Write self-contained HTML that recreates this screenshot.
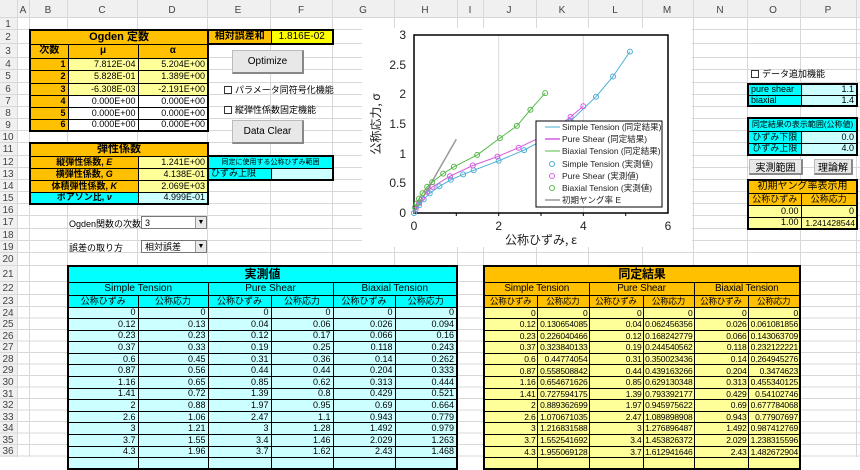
<!DOCTYPE html>
<html><head><meta charset="utf-8"><style>
*{margin:0;padding:0;box-sizing:border-box}
body{width:860px;height:457px;overflow:hidden;background:#fff;position:relative;font-family:"Liberation Sans","Noto Sans CJK JP",sans-serif;color:#000}
.a{position:absolute}
table{border-collapse:collapse;table-layout:fixed;position:absolute}
td{border:1px solid #000;font-size:9px;padding:0 2px;white-space:nowrap;overflow:hidden;line-height:1}
.o{background:#ffc000}.y{background:#ffff99}.Y{background:#ffff00}.c{background:#00ffff}.lc{background:#ccffff}.w{background:#fff}
.r{text-align:right}.m{text-align:center}.b{font-weight:bold}
.thick{border:2px solid #000}
.id td{padding:0 1px;font-size:8.5px;letter-spacing:-0.2px}
.btn{position:absolute;background:#e8e8e8;border:1px solid #bbb;border-right:2px solid #888;border-bottom:2px solid #888;font-size:10px;text-align:center;display:flex;align-items:center;justify-content:center}
.cb{position:absolute;font-size:9px;display:flex;align-items:center;gap:3px}
.cb i{display:inline-block;width:8px;height:8px;border:1px solid #333;background:#fff}
.dd{position:absolute;border:1px solid #777;background:#fff;font-size:9px;padding-left:3px;line-height:12px}
.dd b{position:absolute;right:0;top:0;width:11px;height:11px;background:#e8e8e8;border-left:1px solid #999;font-size:7px;text-align:center;line-height:11px}
</style></head><body>
<svg class="a" style="left:0;top:0" width="860" height="457">
<rect x="0" y="0" width="860" height="17" fill="#f0f0f0"/>
<rect x="0" y="0" width="17" height="457" fill="#f0f0f0"/>
<g stroke="#d8d8d8" stroke-width="1">
<line x1="17.5" y1="0" x2="17.5" y2="457"/><line x1="29.5" y1="0" x2="29.5" y2="457"/><line x1="67.5" y1="0" x2="67.5" y2="457"/><line x1="137.5" y1="0" x2="137.5" y2="457"/><line x1="207.5" y1="0" x2="207.5" y2="457"/><line x1="270.5" y1="0" x2="270.5" y2="457"/><line x1="332.5" y1="0" x2="332.5" y2="457"/><line x1="394.5" y1="0" x2="394.5" y2="457"/><line x1="457.5" y1="0" x2="457.5" y2="457"/><line x1="483.5" y1="0" x2="483.5" y2="457"/><line x1="536.5" y1="0" x2="536.5" y2="457"/><line x1="588.5" y1="0" x2="588.5" y2="457"/><line x1="642.5" y1="0" x2="642.5" y2="457"/><line x1="693.5" y1="0" x2="693.5" y2="457"/><line x1="747.5" y1="0" x2="747.5" y2="457"/><line x1="800.5" y1="0" x2="800.5" y2="457"/><line x1="856.5" y1="0" x2="856.5" y2="457"/>
<line x1="0" y1="17.5" x2="860" y2="17.5"/><line x1="0" y1="29.5" x2="860" y2="29.5"/><line x1="0" y1="43.5" x2="860" y2="43.5"/><line x1="0" y1="57.5" x2="860" y2="57.5"/><line x1="0" y1="69.5" x2="860" y2="69.5"/><line x1="0" y1="82.5" x2="860" y2="82.5"/><line x1="0" y1="94.5" x2="860" y2="94.5"/><line x1="0" y1="106.5" x2="860" y2="106.5"/><line x1="0" y1="118.5" x2="860" y2="118.5"/><line x1="0" y1="130.5" x2="860" y2="130.5"/><line x1="0" y1="142.5" x2="860" y2="142.5"/><line x1="0" y1="155.5" x2="860" y2="155.5"/><line x1="0" y1="167.5" x2="860" y2="167.5"/><line x1="0" y1="179.5" x2="860" y2="179.5"/><line x1="0" y1="191.5" x2="860" y2="191.5"/><line x1="0" y1="203.5" x2="860" y2="203.5"/><line x1="0" y1="215.5" x2="860" y2="215.5"/><line x1="0" y1="228.5" x2="860" y2="228.5"/><line x1="0" y1="240.5" x2="860" y2="240.5"/><line x1="0" y1="252.5" x2="860" y2="252.5"/><line x1="0" y1="265.5" x2="860" y2="265.5"/><line x1="0" y1="281.5" x2="860" y2="281.5"/><line x1="0" y1="294.5" x2="860" y2="294.5"/><line x1="0" y1="306.5" x2="860" y2="306.5"/><line x1="0" y1="318" x2="860" y2="318"/><line x1="0" y1="329.5" x2="860" y2="329.5"/><line x1="0" y1="341" x2="860" y2="341"/><line x1="0" y1="352.5" x2="860" y2="352.5"/><line x1="0" y1="364" x2="860" y2="364"/><line x1="0" y1="375.5" x2="860" y2="375.5"/><line x1="0" y1="387" x2="860" y2="387"/><line x1="0" y1="398.5" x2="860" y2="398.5"/><line x1="0" y1="410" x2="860" y2="410"/><line x1="0" y1="421.5" x2="860" y2="421.5"/><line x1="0" y1="433" x2="860" y2="433"/><line x1="0" y1="444.5" x2="860" y2="444.5"/><line x1="0" y1="456" x2="860" y2="456"/>
</g>
<g font-size="10" fill="#444" text-anchor="middle" font-family="Liberation Sans,sans-serif">
<text x="23" y="13">A</text><text x="48" y="13">B</text><text x="102" y="13">C</text><text x="172" y="13">D</text><text x="238" y="13">E</text><text x="301" y="13">F</text><text x="363" y="13">G</text><text x="425" y="13">H</text><text x="470" y="13">I</text><text x="509" y="13">J</text><text x="562" y="13">K</text><text x="615" y="13">L</text><text x="667" y="13">M</text><text x="720" y="13">N</text><text x="773" y="13">O</text><text x="828" y="13">P</text>
<text x="8" y="27">1</text><text x="8" y="40">2</text><text x="8" y="54">3</text><text x="8" y="67">4</text><text x="8" y="79">5</text><text x="8" y="92">6</text><text x="8" y="104">7</text><text x="8" y="116">8</text><text x="8" y="128">9</text><text x="8" y="140">10</text><text x="8" y="152">11</text><text x="8" y="165">12</text><text x="8" y="177">13</text><text x="8" y="189">14</text><text x="8" y="201">15</text><text x="8" y="213">16</text><text x="8" y="225">17</text><text x="8" y="238">18</text><text x="8" y="250">19</text><text x="8" y="262">20</text><text x="8" y="277">21</text><text x="8" y="291">22</text><text x="8" y="304">23</text><text x="8" y="316">24</text><text x="8" y="327">25</text><text x="8" y="339">26</text><text x="8" y="350">27</text><text x="8" y="362">28</text><text x="8" y="373">29</text><text x="8" y="385">30</text><text x="8" y="397">31</text><text x="8" y="408">32</text><text x="8" y="420">33</text><text x="8" y="431">34</text><text x="8" y="443">35</text><text x="8" y="454">36</text>
</g>
<rect x="362" y="28" width="330" height="219" fill="#fff"/>
<g stroke="#d9d9d9"><line x1="498.7" y1="35" x2="498.7" y2="213"/><line x1="583.3" y1="35" x2="583.3" y2="213"/></g>
<rect x="414" y="35" width="254" height="178" fill="none" stroke="#000" stroke-width="1.5"/>
<g stroke="#000"><line x1="456.3" y1="213" x2="456.3" y2="216"/><line x1="498.7" y1="213" x2="498.7" y2="216"/><line x1="541" y1="213" x2="541" y2="216"/><line x1="583.3" y1="213" x2="583.3" y2="216"/><line x1="625.7" y1="213" x2="625.7" y2="216"/></g>
<g font-size="12" fill="#222" font-family="Liberation Sans,sans-serif" text-anchor="end">
<text x="406" y="217">0</text><text x="406" y="187">0.5</text><text x="406" y="158">1</text><text x="406" y="128">1.5</text><text x="406" y="98">2</text><text x="406" y="69">2.5</text><text x="406" y="39">3</text>
</g>
<g font-size="12" fill="#222" font-family="Liberation Sans,sans-serif" text-anchor="middle">
<text x="414" y="230">0</text><text x="498.7" y="230">2</text><text x="583.3" y="230">4</text><text x="668" y="230">6</text>
</g>
<text x="541" y="244" font-size="12" text-anchor="middle" fill="#222" font-family="Noto Sans CJK JP,sans-serif">公称ひずみ, ε</text>
<text transform="translate(380,124) rotate(-90)" font-size="12" text-anchor="middle" fill="#222" font-family="Noto Sans CJK JP,sans-serif">公称応力, σ</text>
<polyline fill="none" stroke="#999" stroke-width="1.5" points="414,213 456.3,139.3"/>
<g fill="none" stroke-width="1">
<polyline stroke="#4aaed6" points="414,213 419.1,205.3 423.7,199.4 429.7,193.4 439.4,186.3 450.8,179.8 463.1,174.4 473.7,170.3 498.7,160.8 524.1,150.1 541,141.2 570.6,121 596,96.7 613,76.5 629.9,51.6"/>
<polyline stroke="#d45be0" points="414,213 415.7,209.4 419.1,202.9 422,198.2 427.1,191.6 432.6,186.9 450,176.2 472.8,165.5 497.4,156.6 518.6,147.7 541,137.1 557.9,126.4 570.6,116.9 583.3,106.2"/>
<polyline stroke="#55b848" points="414,213 415.1,207.4 416.8,203.5 419,198.6 419.9,197.5 422.6,193.2 427.2,186.7 432.2,182.1 443.2,173.6 453.9,166.8 477.2,154.9 499.9,138.1 516.9,125.9 530.4,109.8 545.2,93.1"/>
</g>
<g fill="none" stroke="#4aaed6">
<circle cx="414" cy="213" r="2.5"/><circle cx="419.1" cy="205.3" r="2.5"/><circle cx="423.7" cy="199.4" r="2.5"/><circle cx="429.7" cy="193.4" r="2.5"/><circle cx="439.4" cy="186.3" r="2.5"/><circle cx="450.8" cy="179.8" r="2.5"/><circle cx="463.1" cy="174.4" r="2.5"/><circle cx="473.7" cy="170.3" r="2.5"/><circle cx="498.7" cy="160.8" r="2.5"/><circle cx="524.1" cy="150.1" r="2.5"/><circle cx="541" cy="141.2" r="2.5"/><circle cx="570.6" cy="121" r="2.5"/><circle cx="596" cy="96.7" r="2.5"/><circle cx="613" cy="76.5" r="2.5"/><circle cx="629.9" cy="51.6" r="2.5"/>
</g>
<g fill="none" stroke="#d45be0">
<circle cx="415.7" cy="209.4" r="2.5"/><circle cx="419.1" cy="202.9" r="2.5"/><circle cx="422" cy="198.2" r="2.5"/><circle cx="427.1" cy="191.6" r="2.5"/><circle cx="432.6" cy="186.9" r="2.5"/><circle cx="450" cy="176.2" r="2.5"/><circle cx="472.8" cy="165.5" r="2.5"/><circle cx="497.4" cy="156.6" r="2.5"/><circle cx="518.6" cy="147.7" r="2.5"/><circle cx="541" cy="137.1" r="2.5"/><circle cx="557.9" cy="126.4" r="2.5"/><circle cx="570.6" cy="116.9" r="2.5"/><circle cx="583.3" cy="106.2" r="2.5"/>
</g>
<g fill="none" stroke="#55b848">
<circle cx="415.1" cy="207.4" r="2.5"/><circle cx="416.8" cy="203.5" r="2.5"/><circle cx="419" cy="198.6" r="2.5"/><circle cx="422.6" cy="193.2" r="2.5"/><circle cx="427.2" cy="186.7" r="2.5"/><circle cx="432.2" cy="182.1" r="2.5"/><circle cx="443.2" cy="173.6" r="2.5"/><circle cx="453.9" cy="166.8" r="2.5"/><circle cx="477.2" cy="154.9" r="2.5"/><circle cx="499.9" cy="138.1" r="2.5"/><circle cx="516.9" cy="125.9" r="2.5"/><circle cx="530.4" cy="109.8" r="2.5"/><circle cx="545.2" cy="93.1" r="2.5"/>
</g>
<rect x="536" y="121" width="126" height="86" fill="#fff" stroke="#000"/>
<g font-size="8.5" fill="#222" font-family="Liberation Sans,Noto Sans CJK JP,sans-serif">
<line x1="545" y1="127" x2="560" y2="127" stroke="#4aaed6"/><text x="562" y="130">Simple Tension (同定結果)</text>
<line x1="545" y1="139" x2="560" y2="139" stroke="#d45be0" stroke-width="1.5"/><text x="562" y="142">Pure Shear (同定結果)</text>
<line x1="545" y1="151" x2="560" y2="151" stroke="#55b848"/><text x="562" y="154">Biaxial Tension (同定結果)</text>
<circle cx="552" cy="164" r="2.5" fill="none" stroke="#4aaed6"/><text x="562" y="167">Simple Tension (実測値)</text>
<circle cx="552" cy="176" r="2.5" fill="none" stroke="#d45be0"/><text x="562" y="179">Pure Shear (実測値)</text>
<circle cx="552" cy="188" r="2.5" fill="none" stroke="#55b848"/><text x="562" y="191">Biaxial Tension (実測値)</text>
<line x1="545" y1="200" x2="560" y2="200" stroke="#999" stroke-width="1.5"/><text x="562" y="203">初期ヤング率 E</text>
</g>
</svg>

<table class="thick" style="left:29px;top:29px;width:179px">
<colgroup><col style="width:38px"><col style="width:70px"><col style="width:70px"></colgroup>
<tr style="height:14px"><td colspan="3" class="o m b" style="font-size:11px">Ogden 定数</td></tr>
<tr style="height:14px"><td class="o m b" style="font-size:10px">次数</td><td class="o m b" style="font-size:10px">μ</td><td class="o m b" style="font-size:10px">α</td></tr>
<tr style="height:12px"><td class="o r b">1</td><td class="y r">7.812E-04</td><td class="y r">5.204E+00</td></tr>
<tr style="height:13px"><td class="o r b">2</td><td class="y r">5.828E-01</td><td class="y r">1.389E+00</td></tr>
<tr style="height:12px"><td class="o r b">3</td><td class="y r">-6.308E-03</td><td class="y r">-2.191E+00</td></tr>
<tr style="height:12px"><td class="o r b">4</td><td class="w r">0.000E+00</td><td class="w r">0.000E+00</td></tr>
<tr style="height:12px"><td class="o r b">5</td><td class="w r">0.000E+00</td><td class="w r">0.000E+00</td></tr>
<tr style="height:12px"><td class="o r b">6</td><td class="w r">0.000E+00</td><td class="w r">0.000E+00</td></tr>
</table>
<table class="thick" style="left:207px;top:29px;width:126px">
<colgroup><col style="width:63px"><col style="width:62px"></colgroup>
<tr style="height:14px"><td class="o m b" style="font-size:10px">相対誤差和</td><td class="Y m" style="font-size:10px">1.816E-02</td></tr>
</table>
<div class="btn" style="left:232px;top:50px;width:72px;height:24px">Optimize</div>
<div class="cb" style="left:224px;top:83px"><i></i>パラメータ同符号化機能</div>
<div class="cb" style="left:224px;top:103px"><i></i>縦弾性係数固定機能</div>
<div class="btn" style="left:232px;top:120px;width:72px;height:24px">Data Clear</div>

<table class="thick" style="left:29px;top:142px;width:179px">
<colgroup><col style="width:108px"><col style="width:70px"></colgroup>
<tr style="height:13px"><td colspan="2" class="o m b" style="font-size:11px">弾性係数</td></tr>
<tr style="height:12px"><td class="o m b">縦弾性係数, <i>E</i></td><td class="y r">1.241E+00</td></tr>
<tr style="height:12px"><td class="o m b">横弾性係数, <i>G</i></td><td class="y r">4.138E-01</td></tr>
<tr style="height:12px"><td class="o m b">体積弾性係数, <i>K</i></td><td class="y r">2.069E+03</td></tr>
<tr style="height:12px"><td class="c m b">ポアソン比, <i>ν</i></td><td class="lc r">4.999E-01</td></tr>
</table>
<table class="thick" style="left:207px;top:155px;width:126px">
<colgroup><col style="width:63px"><col style="width:62px"></colgroup>
<tr style="height:12px"><td colspan="2" class="c m" style="font-size:7px">同定に使用する公称ひずみ範囲</td></tr>
<tr style="height:12px"><td class="c">ひずみ上限</td><td class="lc"></td></tr>
</table>

<div class="a" style="left:69px;top:217px;font-size:9px">Ogden関数の次数</div>
<div class="dd" style="left:141px;top:216px;width:66px;height:13px">3<b>▼</b></div>
<div class="a" style="left:69px;top:241px;font-size:9px">誤差の取り方</div>
<div class="dd" style="left:141px;top:240px;width:66px;height:13px">相対誤差<b>▼</b></div>

<div class="cb" style="left:751px;top:67px"><i></i>データ追加機能</div>
<table style="left:747px;top:83px;width:110px;border:2px solid #000">
<colgroup><col style="width:53px"><col style="width:56px"></colgroup>
<tr style="height:11px"><td class="c">pure shear</td><td class="lc r">1.1</td></tr>
<tr style="height:11px"><td class="c">biaxial</td><td class="lc r">1.4</td></tr>
</table>
<table style="left:747px;top:117px;width:110px;border:2px solid #000">
<colgroup><col style="width:53px"><col style="width:56px"></colgroup>
<tr style="height:13px"><td colspan="2" class="c m" style="font-size:8px">同定結果の表示範囲(公称値)</td></tr>
<tr style="height:12px"><td class="c m">ひずみ下限</td><td class="lc r">0.0</td></tr>
<tr style="height:12px"><td class="c m">ひずみ上限</td><td class="lc r">4.0</td></tr>
</table>
<div class="btn" style="left:749px;top:159px;width:54px;height:16px;font-size:10px">実測範囲</div>
<div class="btn" style="left:814px;top:159px;width:39px;height:16px;font-size:10px">理論解</div>
<table style="left:747px;top:179px;width:110px;border:2px solid #000">
<colgroup><col style="width:53px"><col style="width:56px"></colgroup>
<tr style="height:13px"><td colspan="2" class="o m" style="font-size:10px">初期ヤング率表示用</td></tr>
<tr style="height:12px"><td class="o m">公称ひずみ</td><td class="o m">公称応力</td></tr>
<tr style="height:12px"><td class="y r">0.00</td><td class="y r">0</td></tr>
<tr style="height:12px"><td class="y r">1.00</td><td class="y r" style="font-size:8.5px;padding:0 1px">1.241428544</td></tr>
</table>

<table style="left:67px;top:265px;width:390px;border:2px solid #000">
<colgroup><col style="width:70px"><col style="width:70px"><col style="width:63px"><col style="width:62px"><col style="width:62px"><col style="width:62px"></colgroup>
<tr style="height:16px"><td colspan="6" class="c m b" style="font-size:12px">実測値</td></tr>
<tr style="height:13px"><td colspan="2" class="c m" style="font-size:10px">Simple Tension</td><td colspan="2" class="c m" style="font-size:10px">Pure Shear</td><td colspan="2" class="c m" style="font-size:10px">Biaxial Tension</td></tr>
<tr style="height:12px"><td class="c m">公称ひずみ</td><td class="c m">公称応力</td><td class="c m">公称ひずみ</td><td class="c m">公称応力</td><td class="c m">公称ひずみ</td><td class="c m">公称応力</td></tr>
<tr style="height:11.6px" class="lc r"><td>0</td><td>0</td><td>0</td><td>0</td><td>0</td><td>0</td></tr>
<tr style="height:11.6px" class="lc r"><td>0.12</td><td>0.13</td><td>0.04</td><td>0.06</td><td>0.026</td><td>0.094</td></tr>
<tr style="height:11.6px" class="lc r"><td>0.23</td><td>0.23</td><td>0.12</td><td>0.17</td><td>0.066</td><td>0.16</td></tr>
<tr style="height:11.6px" class="lc r"><td>0.37</td><td>0.33</td><td>0.19</td><td>0.25</td><td>0.118</td><td>0.243</td></tr>
<tr style="height:11.6px" class="lc r"><td>0.6</td><td>0.45</td><td>0.31</td><td>0.36</td><td>0.14</td><td>0.262</td></tr>
<tr style="height:11.6px" class="lc r"><td>0.87</td><td>0.56</td><td>0.44</td><td>0.44</td><td>0.204</td><td>0.333</td></tr>
<tr style="height:11.6px" class="lc r"><td>1.16</td><td>0.65</td><td>0.85</td><td>0.62</td><td>0.313</td><td>0.444</td></tr>
<tr style="height:11.6px" class="lc r"><td>1.41</td><td>0.72</td><td>1.39</td><td>0.8</td><td>0.429</td><td>0.521</td></tr>
<tr style="height:11.6px" class="lc r"><td>2</td><td>0.88</td><td>1.97</td><td>0.95</td><td>0.69</td><td>0.664</td></tr>
<tr style="height:11.6px" class="lc r"><td>2.6</td><td>1.06</td><td>2.47</td><td>1.1</td><td>0.943</td><td>0.779</td></tr>
<tr style="height:11.6px" class="lc r"><td>3</td><td>1.21</td><td>3</td><td>1.28</td><td>1.492</td><td>0.979</td></tr>
<tr style="height:11.6px" class="lc r"><td>3.7</td><td>1.55</td><td>3.4</td><td>1.46</td><td>2.029</td><td>1.263</td></tr>
<tr style="height:11.6px" class="lc r"><td>4.3</td><td>1.96</td><td>3.7</td><td>1.62</td><td>2.43</td><td>1.468</td></tr>
<tr style="height:11.6px" class="lc r"><td></td><td></td><td></td><td></td><td></td><td></td></tr>
</table>

<table class="id" style="left:483px;top:265px;width:317px;border:2px solid #000">
<colgroup><col style="width:53px"><col style="width:52px"><col style="width:54px"><col style="width:51px"><col style="width:54px"><col style="width:52px"></colgroup>
<tr style="height:16px"><td colspan="6" class="o m b" style="font-size:12px">同定結果</td></tr>
<tr style="height:13px"><td colspan="2" class="o m" style="font-size:10px">Simple Tension</td><td colspan="2" class="o m" style="font-size:10px">Pure Shear</td><td colspan="2" class="o m" style="font-size:10px">Biaxial Tension</td></tr>
<tr style="height:12px"><td class="o m">公称ひずみ</td><td class="o m">公称応力</td><td class="o m">公称ひずみ</td><td class="o m">公称応力</td><td class="o m">公称ひずみ</td><td class="o m">公称応力</td></tr>
<tr style="height:11.6px" class="y r"><td>0</td><td>0</td><td>0</td><td>0</td><td>0</td><td>0</td></tr>
<tr style="height:11.6px" class="y r"><td>0.12</td><td>0.130654085</td><td>0.04</td><td>0.062456356</td><td>0.026</td><td>0.061081856</td></tr>
<tr style="height:11.6px" class="y r"><td>0.23</td><td>0.226040466</td><td>0.12</td><td>0.168242779</td><td>0.066</td><td>0.143063709</td></tr>
<tr style="height:11.6px" class="y r"><td>0.37</td><td>0.323840133</td><td>0.19</td><td>0.244540562</td><td>0.118</td><td>0.232122221</td></tr>
<tr style="height:11.6px" class="y r"><td>0.6</td><td>0.44774054</td><td>0.31</td><td>0.350023436</td><td>0.14</td><td>0.264945276</td></tr>
<tr style="height:11.6px" class="y r"><td>0.87</td><td>0.558508842</td><td>0.44</td><td>0.439163266</td><td>0.204</td><td>0.3474623</td></tr>
<tr style="height:11.6px" class="y r"><td>1.16</td><td>0.654671626</td><td>0.85</td><td>0.629130348</td><td>0.313</td><td>0.455340125</td></tr>
<tr style="height:11.6px" class="y r"><td>1.41</td><td>0.727594175</td><td>1.39</td><td>0.793392177</td><td>0.429</td><td>0.54102746</td></tr>
<tr style="height:11.6px" class="y r"><td>2</td><td>0.889362699</td><td>1.97</td><td>0.945975622</td><td>0.69</td><td>0.677784068</td></tr>
<tr style="height:11.6px" class="y r"><td>2.6</td><td>1.070671035</td><td>2.47</td><td>1.089898908</td><td>0.943</td><td>0.77907697</td></tr>
<tr style="height:11.6px" class="y r"><td>3</td><td>1.216831588</td><td>3</td><td>1.276896487</td><td>1.492</td><td>0.987412769</td></tr>
<tr style="height:11.6px" class="y r"><td>3.7</td><td>1.552541692</td><td>3.4</td><td>1.453826372</td><td>2.029</td><td>1.238315596</td></tr>
<tr style="height:11.6px" class="y r"><td>4.3</td><td>1.955069128</td><td>3.7</td><td>1.612941646</td><td>2.43</td><td>1.482672904</td></tr>
<tr style="height:11.6px" class="y r"><td></td><td></td><td></td><td></td><td></td><td></td></tr>
</table>
</body></html>
